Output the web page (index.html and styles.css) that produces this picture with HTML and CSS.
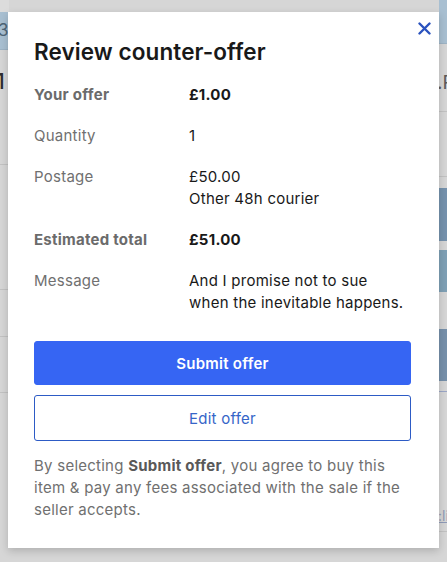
FILE: index.html
```html
<!DOCTYPE html>
<html lang="en">
<head>
<meta charset="utf-8">
<title>Review counter-offer</title>
<link rel="stylesheet" href="styles.css">
</head>
<body>
<div class="page">
  <div class="strip left">
    <div class="seg top"></div>
    <div class="seg blue s-head"><span class="num">3</span></div>
    <div class="seg s1"><span class="big">1</span></div>
    <div class="seg s2"></div>
    <div class="seg s3"></div>
    <div class="seg s4"></div>
    <div class="seg fill"></div>
  </div>
  <div class="strip right">
    <div class="seg blue r-head"></div>
    <div class="seg r1"><span class="rt">.R</span></div>
    <div class="seg r2"></div>
    <div class="seg gap1"></div>
    <div class="seg blk b1"></div>
    <div class="seg gap2"></div>
    <div class="seg blk b2"></div>
    <div class="seg gap3"></div>
    <div class="seg blk b3"></div>
    <div class="seg r3"></div>
    <div class="seg r4"><span class="lnk">:li</span></div>
    <div class="seg fill"></div>
  </div>
</div>

<div class="modal" role="dialog" aria-labelledby="ttl">
  <button class="close" aria-label="Close">
    <svg width="13" height="13" viewBox="0 0 13 13"><path d="M1.5 1.5 L11.5 11.5 M11.5 1.5 L1.5 11.5" stroke="#2a52be" stroke-width="2.4" stroke-linecap="round" fill="none"/></svg>
  </button>
  <h2 class="title" id="ttl">Review counter-offer</h2>
  <dl class="details">
    <dt class="strong">Your offer</dt><dd class="strong">£1.00</dd>
    <dt>Quantity</dt><dd>1</dd>
    <dt>Postage</dt><dd>£50.00<br>Other 48h courier</dd>
    <dt class="strong">Estimated total</dt><dd class="strong">£51.00</dd>
    <dt>Message</dt><dd>And I promise not to sue<br>when the inevitable happens.</dd>
  </dl>
  <button class="btn primary">Submit offer</button>
  <button class="btn secondary">Edit offer</button>
  <p class="legal">By selecting <b>Submit offer</b>, you agree to buy this item &amp; pay any fees associated with the sale if the seller accepts.</p>
</div>
</body>
</html>
```
FILE: styles.css
```css
* { box-sizing: border-box; }
html, body { margin: 0; padding: 0; }
body {
  width: 447px;
  height: 562px;
  overflow: hidden;
  background: #d6d6d6;
  font-family: Inter, "Noto Sans", sans-serif;
  position: relative;
}
.page {
  display: flex;
  justify-content: space-between;
  height: 562px;
}
.strip { width: 9px; display: flex; flex-direction: column; overflow: hidden; }
.strip.left { border-top: 12px solid #dcdcdc; }
.strip.right { width: 8px; }
.seg { flex: none; border-bottom: 1px solid #c2c2c2; position: relative; overflow: hidden; }
.seg.top { display: none; }
.seg.fill { flex: 1; border-bottom: none; }
.blue { background: #a8bfd1; border-bottom-color: #9db3c4; }
.s-head { height: 38px; }
.num { position: absolute; left: -2px; top: 8px; font-size: 17px; color: #4e6577; }
.s1 { height: 115px; }
.big { position: absolute; left: -4px; top: 19px; font-size: 21px; color: #2e2e2e; font-weight: 500; }
.s2 { height: 125px; }
.s3 { height: 47px; }
.s4 { height: 56px; }
.r-head { height: 44px; }
.r1 { height: 68px; }
.rt { position: absolute; left: -2px; top: 27px; font-size: 19px; color: #5b5b5b; white-space: nowrap; }
.r2 { height: 65px; }
.gap1 { height: 11px; border-bottom: none; }
.blk { border-bottom: none; }
.b1 { height: 53px; background: #7592ad; }
.gap2 { height: 9px; border-bottom: none; }
.b2 { height: 42px; background: #7ea0b5; }
.gap3 { height: 37px; border-bottom: none; }
.b3 { height: 52px; background: #7690aa; }
.r3 { height: 11px; border-bottom-color: #9ba6c6; }
.r4 { height: 140px; }
.lnk { position: absolute; left: -1px; top: 115px; font-size: 14px; color: #8f9bb8; text-decoration: underline; }

.modal {
  position: absolute;
  left: 8px;
  top: 12px;
  width: 431px;
  height: 536px;
  background: #fff;
  box-shadow: 0 3px 8px rgba(0,0,0,0.18);
  padding: 26px 28px 27px 26px;
  color: #191919;
  letter-spacing: 0.25px;
}
.close {
  position: absolute;
  top: 9px;
  right: 8px;
  width: 14px;
  height: 14px;
  padding: 0;
  border: 0;
  background: none;
  display: flex;
  align-items: center;
  justify-content: center;
}
.title {
  margin: 0;
  font-size: 22.5px;
  line-height: 28px;
  font-weight: 600;
  color: #191919;
  letter-spacing: 0.1px;
}
.details {
  margin: 18px 0 0;
  display: grid;
  grid-template-columns: 155px 1fr;
  row-gap: 19px;
  font-size: 15px;
  line-height: 22px;
}
.details dt { color: #707070; }
.details dd { margin: 0; color: #191919; }
.details .strong { font-weight: 700; }
.details dt.strong { color: #6b6b6b; }
.btn {
  display: block;
  width: 100%;
  font-family: inherit;
  font-size: 15px;
  letter-spacing: 0.25px;
  border-radius: 3px;
  cursor: pointer;
}
.primary {
  margin-top: 27px;
  height: 44px;
  background: #3665f3;
  border: 1px solid #3665f3;
  color: #fff;
  font-weight: 600;
}
.secondary {
  margin-top: 10px;
  height: 46px;
  background: #fff;
  border: 1px solid #2d5bc5;
  color: #3665c8;
  font-weight: 400;
}
.legal {
  margin: 14px 0 0;
  font-size: 15px;
  line-height: 22px;
  color: #707070;
}
.legal b { color: #595959; font-weight: 700; }
```
